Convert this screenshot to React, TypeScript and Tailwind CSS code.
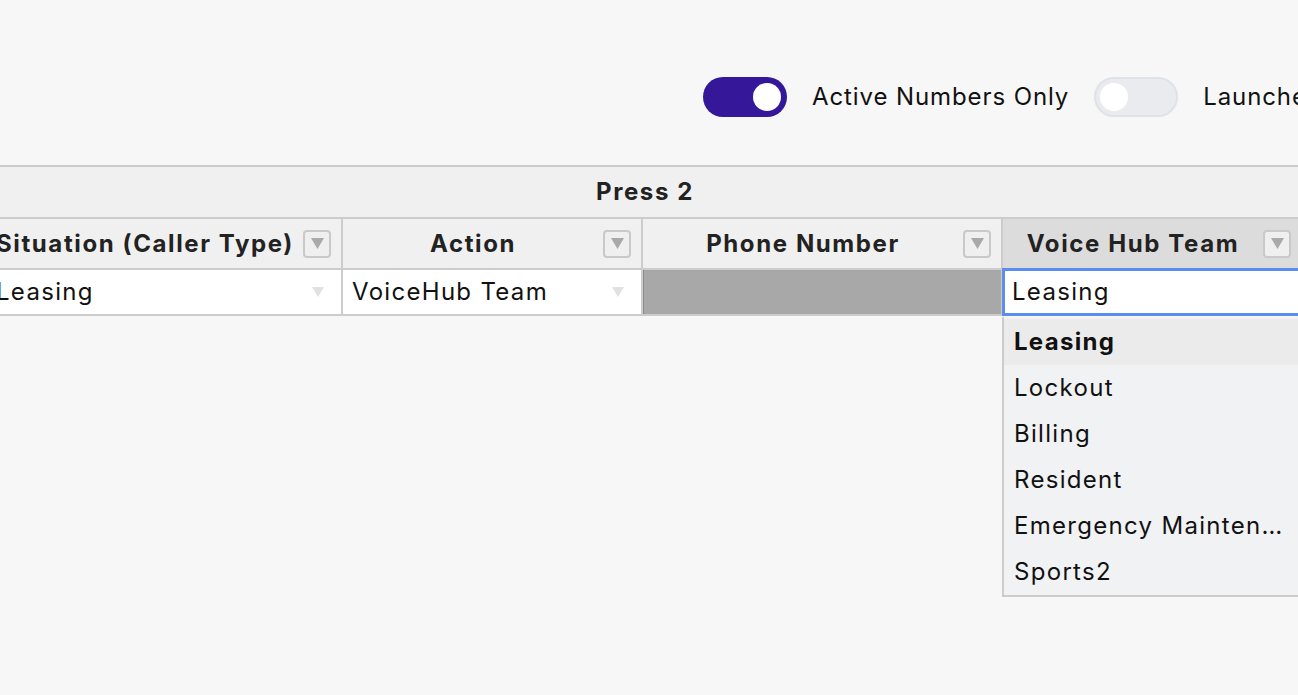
import { ReactNode } from "react";

const Arrow = ({ className }: { className: string }) => (
  <svg viewBox="0 0 12 12" className={className}>
    <path d="M0 1h12L6 11z" fill="currentColor" />
  </svg>
);

const FilterButton = () => (
  <div className="mr-[10px] flex h-[28px] w-[28px] shrink-0 items-center justify-center rounded-[4px] border-2 border-[#c9c9c9] bg-[#efefef] text-[#a9a9a9]">
    <Arrow className="h-[13px] w-[13px]" />
  </div>
);

const Toggle = ({ on }: { on: boolean }) =>
  on ? (
    <div className="flex h-[40px] w-[84px] shrink-0 items-center justify-end rounded-full bg-[#35179a] pr-[6px]">
      <div className="h-[28px] w-[28px] rounded-full bg-white" />
    </div>
  ) : (
    <div className="flex h-[40px] w-[84px] shrink-0 items-center rounded-full border-2 border-[#dfe2e6] bg-[#e9ebef] pl-[4px]">
      <div className="h-[28px] w-[28px] rounded-full bg-white" />
    </div>
  );

const HeaderCell = ({
  width,
  active,
  children,
}: {
  width: string;
  active?: boolean;
  children: ReactNode;
}) => (
  <div
    className={`flex h-full shrink-0 items-center border-r-2 border-[#cccccc] ${width} ${
      active ? "bg-[#dcdcdc]" : "bg-[#f0f0f0]"
    }`}
  >
    <div className="flex-1 whitespace-nowrap text-center">{children}</div>
    <FilterButton />
  </div>
);

const SelectCell = ({ width, value }: { width: string; value: string }) => (
  <div
    className={`flex h-full shrink-0 items-center justify-between border-r-2 border-[#cccccc] bg-white pl-[9px] pr-[17px] ${width}`}
  >
    <span>{value}</span>
    <Arrow className="h-[12px] w-[12px] text-[#e2e2e2]" />
  </div>
);

const teams = [
  "Leasing",
  "Lockout",
  "Billing",
  "Resident",
  "Emergency Maintenance",
  "Sports2",
];

export default function App() {
  return (
    <div className="h-[695px] overflow-hidden bg-[#f7f7f7] font-['Inter',sans-serif] text-[#111]">
      <div className="flex items-center gap-[25px] whitespace-nowrap pl-[703px] pt-[77px] text-[24px] tracking-[0.9px]">
        <Toggle on />
        <span>Active Numbers Only</span>
        <Toggle on={false} />
        <span>Launched Numbers Only</span>
      </div>

      <div className="ml-[-13px] mt-[48px] w-[1316px] text-[24px] tracking-[1.3px]">
        <div className="flex h-[54px] items-center justify-center border-y-2 border-[#cccccc] bg-[#f0f0f0] text-[24px] font-bold tracking-[1.6px] text-[#222]">
          Press 2
        </div>

        <div className="flex h-[51px] border-b-2 border-[#cccccc] text-[24px] font-bold tracking-[1.6px] text-[#222]">
          <HeaderCell width="w-[356px]">Situation (Caller Type)</HeaderCell>
          <HeaderCell width="w-[300px]">Action</HeaderCell>
          <HeaderCell width="w-[360px]">Phone Number</HeaderCell>
          <HeaderCell width="w-[300px]" active>
            Voice Hub Team
          </HeaderCell>
        </div>

        <div className="relative flex h-[46px] border-b-2 border-[#cccccc]">
          <SelectCell width="w-[356px]" value="Leasing" />
          <SelectCell width="w-[300px]" value="VoiceHub Team" />
          <div className="h-full w-[360px] shrink-0 border-l border-r-2 border-l-[#8c8c8c] border-r-[#cccccc] bg-[#a8a8a8]" />
          <div className="h-full w-[300px] shrink-0 bg-white" />

          <div className="absolute left-[1015px] top-[-2px] flex h-[48px] w-[300px] items-center border-[3px] border-[#5b8def] bg-white pl-[7px]">
            Leasing
          </div>

          <div className="absolute left-[1015px] top-[47px] w-[300px] border-b-2 border-l-2 border-[#cccccc] bg-[#f1f2f4] pt-[2px]">
            {teams.map((t, i) => (
              <div
                key={t}
                className={`flex h-[46px] items-center pl-[10px] pr-[12px] ${
                  i === 0 ? "bg-[#ebebeb] font-bold" : ""
                }`}
              >
                <span className="truncate">{t}</span>
              </div>
            ))}
          </div>
        </div>
      </div>
    </div>
  );
}
